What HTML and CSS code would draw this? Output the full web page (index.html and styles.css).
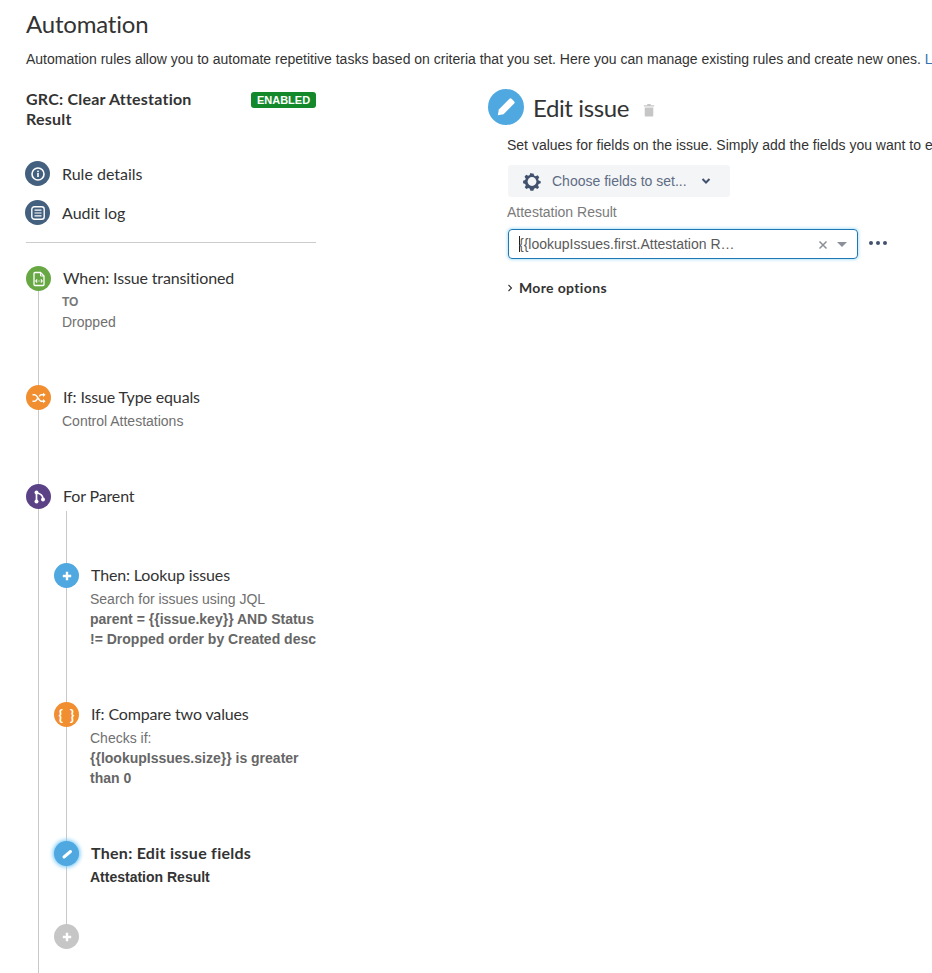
FILE: index.html
```html
<!DOCTYPE html>
<html lang="en">
<head>
<meta charset="utf-8">
<title>Automation</title>
<link rel="stylesheet" href="styles.css">
</head>
<body>
<main class="page">
  <h1 class="page-title">Automation</h1>
  <p class="page-desc">Automation rules allow you to automate repetitive tasks based on criteria that you set. Here you can manage existing rules and create new ones. <a class="link" href="#">Learn more</a></p>

  <div class="columns">
    <aside class="sidebar">
      <div class="rule-head">
        <h2 class="rule-name">GRC: Clear Attestation Result</h2>
        <span class="badge">ENABLED</span>
      </div>

      <nav class="side-nav">
        <a class="side-link" href="#">
          <span class="dot dot-navy">
            <svg viewBox="0 0 16 16" class="ico"><circle cx="8" cy="8" r="6" fill="none" stroke="#fff" stroke-width="1.6"/><rect x="7.2" y="7" width="1.6" height="4" fill="#fff"/><rect x="7.2" y="4.6" width="1.6" height="1.6" fill="#fff"/></svg>
          </span>
          Rule details
        </a>
        <a class="side-link" href="#">
          <span class="dot dot-navy">
            <svg viewBox="0 0 16 16" class="ico"><rect x="1.8" y="1.8" width="12.4" height="12.4" rx="2.5" fill="none" stroke="#fff" stroke-width="1.4"/><path d="M4.5 5.2h7M4.5 8h7M4.5 10.8h7" stroke="#fff" stroke-width="1.2"/></svg>
          </span>
          Audit log
        </a>
      </nav>

      <div class="rail">
        <section class="node node-gap">
          <span class="dot dot-green">
            <svg viewBox="0 0 16 16" class="ico"><path d="M3 2.500a1 1 0 0 1 1-1h5.500l3.500 3.500v8.500a1 1 0 0 1-1 1H4a1 1 0 0 1-1-1z" fill="none" stroke="#fff" stroke-width="1.300"/><path d="M9.500 1.500v3.500H13" fill="none" stroke="#fff" stroke-width="1"/><path d="M6.200 8.500L4.800 10l1.400 1.500M9.800 8.500l1.400 1.500-1.400 1.500" stroke="#fff" stroke-width="1.100" fill="none"/><path d="M7.300 10h1.400" stroke="#fff" stroke-width="1" stroke-dasharray="0.600 0.200" fill="none"/></svg>
          </span>
          <div class="node-body">
            <h3 class="node-title">When: Issue transitioned</h3>
            <p class="node-label">TO</p>
            <p class="node-line">Dropped</p>
          </div>
        </section>

        <section class="node node-gap">
          <span class="dot dot-orange">
            <svg viewBox="0 0 16 16" class="ico"><path d="M1.500 4.800h2.300c2.700 0 3.700 6.400 6.500 6.400h2.500M1.500 11.200h2.300c1.200 0 2-1.200 2.700-2.500M8.300 6.400c.6-.9 1.200-1.600 2-1.600h2.500" fill="none" stroke="#fff" stroke-width="1.500"/><path d="M12 2.700l2.600 2.100L12 6.900zM12 9.100l2.600 2.100L12 13.300z" fill="#fff"/></svg>
          </span>
          <div class="node-body">
            <h3 class="node-title">If: Issue Type equals</h3>
            <p class="node-line">Control Attestations</p>
          </div>
        </section>

        <section class="node">
          <span class="dot dot-purple">
            <svg viewBox="0 0 16 16" class="ico"><circle cx="5.500" cy="3.500" r="2" fill="#fff"/><circle cx="5.500" cy="12.500" r="2" fill="#fff"/><circle cx="12" cy="10.500" r="2" fill="#fff"/><path d="M5.500 4v8M5.500 4c4 .5 6.500 2.500 6.500 6" fill="none" stroke="#fff" stroke-width="1.700"/></svg>
          </span>
          <div class="node-body">
            <h3 class="node-title">For Parent</h3>
          </div>
        </section>

        <div class="rail rail-nested">
          <section class="node node-gap">
            <span class="dot dot-blue">
              <svg viewBox="0 0 16 16" class="ico"><path d="M8 3.800v8.400M3.800 8h8.400" stroke="#fff" stroke-width="2.400" fill="none"/></svg>
            </span>
            <div class="node-body">
              <h3 class="node-title">Then: Lookup issues</h3>
              <p class="node-line">Search for issues using JQL</p>
              <p class="node-line node-strong">parent = {{issue.key}} AND Status != Dropped order by Created desc</p>
            </div>
          </section>

          <section class="node node-gap">
            <span class="dot dot-orange dot-brace">{ }</span>
            <div class="node-body">
              <h3 class="node-title">If: Compare two values</h3>
              <p class="node-line">Checks if:</p>
              <p class="node-line node-strong">{{lookupIssues.size}} is greater than 0</p>
            </div>
          </section>

          <section class="node node-gap-small">
            <span class="dot dot-blue dot-active">
              <svg viewBox="0 0 16 16" class="ico"><path d="M5 11L11.500 5.500" stroke="#fff" stroke-width="3" stroke-linecap="round" fill="none"/></svg>
            </span>
            <div class="node-body">
              <h3 class="node-title node-title-active">Then: Edit issue fields</h3>
              <p class="node-line node-active">Attestation Result</p>
            </div>
          </section>

          <section class="node">
            <span class="dot dot-grey">
              <svg viewBox="0 0 16 16" class="ico"><path d="M8 3.800v8.400M3.800 8h8.400" stroke="#fff" stroke-width="2.400" fill="none"/></svg>
            </span>
          </section>
        </div>
      </div>
    </aside>

    <section class="editor">
      <header class="editor-head">
        <span class="editor-dot">
          <svg viewBox="0 0 24 24" class="editor-ico"><path d="M15.500 3.800a1.500 1.500 0 0 1 2.100 0l2.600 2.600a1.500 1.500 0 0 1 0 2.100L9.500 19.200l-5.700 1 1-5.700z" fill="#fff"/></svg>
        </span>
        <h2 class="editor-title">Edit issue</h2>
        <svg viewBox="0 0 14 16" class="trash"><path d="M5 1h4v1.500h4V4H1V2.500h4z" fill="#c6c6c6"/><path d="M2 5h10v9.500a1 1 0 0 1-1 1H3a1 1 0 0 1-1-1z" fill="#c6c6c6"/></svg>
      </header>

      <div class="editor-body">
        <p class="editor-desc">Set values for fields on the issue. Simply add the fields you want to edit and set their values.</p>

        <button class="choose" type="button">
          <svg viewBox="0 0 20 20" class="gear"><path d="M10 2.500l1.500 0 .6 2.100 1.500.7 2-1 1.700 1.900-1.200 1.800.5 1.500 2.100.7v2.100l-2.100.6-.6 1.600 1.100 1.800-1.700 1.800-1.900-1.100-1.500.7-.6 2.100H8.400l-.6-2.100-1.500-.7-1.900 1.100-1.700-1.800 1.100-1.800-.6-1.600-2.100-.6V9.700l2.100-.7.500-1.500-1.200-1.800 1.700-1.900 2 1 1.500-.7.600-2.100z" fill="#42526e"/><circle cx="10" cy="10.500" r="4.400" fill="#f4f5f7"/></svg>
          <span class="choose-text">Choose fields to set...</span>
          <svg viewBox="0 0 10 8" class="chev"><path d="M1.500 2l3.500 3.500L8.500 2" fill="none" stroke="#42526e" stroke-width="2"/></svg>
        </button>

        <label class="field-label">Attestation Result</label>
        <div class="field-row">
          <div class="select">
            <span class="select-value">{{lookupIssues.first.Attestation R…</span>
            <svg viewBox="0 0 10 10" class="clear"><path d="M1.500 1.500l7 7M8.500 1.500l-7 7" stroke="#8a8f98" stroke-width="1.500" fill="none"/></svg>
            <svg viewBox="0 0 12 7" class="caret"><path d="M1 1h10L6 6z" fill="#8a8f98"/></svg>
          </div>
          <span class="more-dots"><i></i><i></i><i></i></span>
        </div>

        <div class="more-options">
          <svg viewBox="0 0 6 8" class="more-chev"><path d="M1.500 1l3 3-3 3" fill="none" stroke="#333" stroke-width="1.100"/></svg>
          <span>More options</span>
        </div>
      </div>
    </section>
  </div>
</main>
</body>
</html>
```

FILE: styles.css
```css
* {
  box-sizing: border-box;
}

html,
body {
  margin: 0;
  height: 973px;
  overflow: hidden;
  background: #fff;
}

body {
  font-family: "Liberation Sans", Arial, sans-serif;
  font-size: 14px;
  color: #333;
}

h1,
h2,
h3,
p {
  margin: 0;
  font-weight: normal;
}

.page {
  width: 932px;
  padding: 9px 0 0 26px;
  overflow: hidden;
}

.page-title {
  font-family: Lato, sans-serif;
  font-size: 24px;
  line-height: 30px;
  letter-spacing: -0.2px;
  color: #333;
}

.page-desc {
  margin-top: 10px;
  line-height: 20px;
  white-space: nowrap;
}

.link {
  color: #3572b0;
  text-decoration: none;
}

.columns {
  display: flex;
  margin-top: 20px;
}

.sidebar {
  flex: none;
  width: 290px;
}

.rule-head {
  display: flex;
  justify-content: space-between;
  align-items: flex-start;
  height: 72px;
}

.rule-name {
  width: 190px;
  font-family: Lato, sans-serif;
  font-size: 16px;
  font-weight: 700;
  line-height: 20px;
  letter-spacing: 0.22px;
  color: #333;
}

.badge {
  margin-top: 3px;
  height: 16px;
  width: 65px;
  border-radius: 3px;
  background: #14892c;
  color: #fff;
  font-size: 11px;
  font-weight: 700;
  line-height: 16px;
  text-align: center;
}

.side-nav {
  display: flex;
  flex-direction: column;
  gap: 14px;
  padding-bottom: 17px;
  border-bottom: 1px solid #ccc;
  margin-bottom: 23px;
}

.side-link {
  display: flex;
  align-items: center;
  gap: 12px;
  height: 25px;
  margin-left: -1px;
  font-family: Lato, sans-serif;
  font-size: 16px;
  color: #333;
  text-decoration: none;
}

.dot {
  flex: none;
  display: flex;
  align-items: center;
  justify-content: center;
  width: 25px;
  height: 25px;
  border-radius: 50%;
}

.ico {
  width: 16px;
  height: 16px;
}

.dot-navy {
  background: #44607f;
}

.dot-green {
  background: #67a844;
}

.dot-orange {
  background: #f18e2f;
}

.dot-purple {
  background: #5b4287;
}

.dot-blue {
  background: #4fa8df;
}

.dot-grey {
  background: #c6c6c6;
}

.dot-active {
  box-shadow: 0 0 4px 1px #6cc4f5;
}

.dot-brace {
  color: #fff;
  font-family: Lato, sans-serif;
  font-size: 15px;
  font-weight: 700;
  line-height: 25px;
  word-spacing: 3px;
}

.rail {
  margin-left: 12px;
  border-left: 1px solid #c8c8c8;
  padding-bottom: 40px;
}

.node {
  display: flex;
  gap: 12px;
  margin-left: -13px;
}

.node-gap {
  margin-bottom: 53px;
}

.node-gap-small {
  margin-bottom: 37px;
}

.node-body {
  min-width: 0;
  flex: 1;
}

.node-title {
  font-family: Lato, sans-serif;
  font-size: 16px;
  line-height: 24px;
  letter-spacing: -0.14px;
  color: #333;
}

.node-title-active {
  font-weight: 700;
  letter-spacing: 0.27px;
}

.node-label {
  margin: 2px 0 0 -1px;
  font-size: 12px;
  font-weight: 700;
  line-height: 20px;
  color: #777;
}

.node-line {
  margin-left: -1px;
  line-height: 20px;
  color: #707070;
}

.node-title + .node-line {
  margin-top: 2px;
}

.node-strong {
  font-weight: 700;
  color: #666;
}

.node-active {
  font-weight: 700;
  color: #333;
}

.rail-nested {
  margin-left: 27px;
  padding-top: 52px;
  padding-bottom: 0;
  margin-top: 2px;
  width: 250px;
}

.editor {
  flex: none;
  margin-left: 172px;
}

.editor-head {
  display: flex;
  align-items: center;
  height: 36px;
}

.editor-dot {
  flex: none;
  display: flex;
  align-items: center;
  justify-content: center;
  width: 36px;
  height: 36px;
  border-radius: 50%;
  background: #4fa8df;
}

.editor-ico {
  width: 24px;
  height: 24px;
}

.editor-title {
  margin: 2px 0 0 9px;
  font-family: Lato, sans-serif;
  font-size: 24px;
  line-height: 36px;
  letter-spacing: -0.4px;
  color: #333;
}

.trash {
  margin: 5px 0 0 14px;
  width: 12px;
  height: 14px;
}

.editor-body {
  padding-left: 19px;
}

.editor-desc {
  margin-top: 10px;
  line-height: 20px;
  white-space: nowrap;
}

.choose {
  display: flex;
  align-items: center;
  width: 222px;
  height: 32px;
  margin: 10px 0 0 1px;
  padding: 0 0 0 14px;
  border: 0;
  border-radius: 3px;
  background: #f4f5f7;
  font-family: "Liberation Sans", Arial, sans-serif;
  font-size: 14px;
  color: #5e6c84;
}

.gear {
  width: 20px;
  height: 20px;
}

.choose-text {
  margin-left: 10px;
}

.chev {
  width: 10px;
  height: 8px;
  margin-left: 14px;
}

.field-label {
  display: block;
  margin-top: 5px;
  line-height: 20px;
  color: #7a7a7a;
}

.field-row {
  display: flex;
  align-items: center;
  margin: 7px 0 0 1px;
}

.select {
  display: flex;
  align-items: center;
  width: 350px;
  height: 30px;
  padding: 0 9px 0 10px;
  border: 1px solid #1f78b4;
  border-radius: 4px;
  box-shadow: 0 0 3px 1px #b5e3f7;
}

.select-value {
  flex: 1;
  color: #5a5a5a;
  white-space: nowrap;
  border-left: 1px solid #222;
  line-height: 16px;
  text-indent: -1px;
}

.clear {
  width: 10px;
  height: 10px;
  margin: 2px 8px 0 0;
}

.caret {
  width: 12px;
  height: 7px;
}

.more-dots {
  display: flex;
  gap: 3px;
  margin: 0 0 2px 11px;
}

.more-dots i {
  width: 4px;
  height: 4px;
  border-radius: 50%;
  background: #42526e;
}

.more-options {
  display: flex;
  align-items: center;
  gap: 6px;
  margin-top: 19px;
  font-family: Lato, sans-serif;
  font-size: 14px;
  font-weight: 700;
  line-height: 20px;
  letter-spacing: 0.35px;
  color: #333;
}

.more-chev {
  width: 6px;
  height: 8px;
}
```
